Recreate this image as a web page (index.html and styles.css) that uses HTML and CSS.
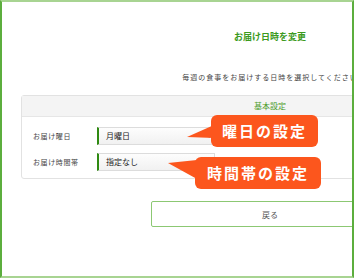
FILE: index.html
```html
<!DOCTYPE html>
<html lang="ja">
<head>
    <meta charset="UTF-8">
    <meta name="viewport" content="width=device-width, initial-scale=1.0">
    <title>お届け日時を変更</title>
    <link rel="stylesheet" href="styles.css">
</head>
<body>
    <div class="frame">
        <div class="page">
            <h1 class="title">お届け日時を変更</h1>
            <p class="lead">毎週の食事をお届けする日時を選択してください</p>
            <div class="panel">
                <div class="panel-head">基本設定</div>
                <div class="panel-body">
                    <div class="row">
                        <span class="label">お届け曜日</span>
                        <div class="select">月曜日<span class="arrow">▾</span></div>
                    </div>
                    <div class="row">
                        <span class="label">お届け時間帯</span>
                        <div class="select">指定なし<span class="arrow">▾</span></div>
                    </div>
                </div>
            </div>
            <button class="back">戻る</button>
        </div>

        <svg class="pointers" width="350" height="274" viewBox="2 2 350 274">
            <polygon points="214,125 187,137 214,138" fill="#fc561d"/>
            <polygon points="197,160 168,163 197,179" fill="#fc561d"/>
        </svg>
        <div class="callout callout-day">曜日の設定</div>
        <div class="callout callout-time">時間帯の設定</div>
    </div>
</body>
</html>
```

FILE: styles.css
```css
body {
    margin: 0;
    font-family: "Noto Sans CJK JP", "Noto Sans", sans-serif;
    background-color: white;
}
.frame {
    position: relative;
    width: 354px;
    height: 278px;
    box-sizing: border-box;
    border-left: 2px solid #5cae3e;
    border-right: 2px solid #5cae3e;
    border-top: 2px solid #a8d492;
    border-bottom: 2px solid #a8d492;
    overflow: hidden;
}
.page {
    width: 536px;
    padding-top: 29px;
}
.title {
    margin: 0;
    font-size: 9px;
    line-height: 12px;
    font-weight: bold;
    color: #3c9a1e;
    text-align: center;
}
.lead {
    margin: 29px 0 0;
    font-size: 7px;
    line-height: 10px;
    letter-spacing: 1px;
    color: #444;
    text-align: center;
}
.panel {
    margin: 13px 19px 0;
    border: 1px solid #e2e2e2;
    border-radius: 3px;
}
.panel-head {
    height: 20px;
    line-height: 20px;
    background-color: #f4f4f4;
    border-bottom: 1px solid #e6e6e6;
    font-size: 8px;
    color: #4d9c2c;
    text-align: center;
}
.panel-body {
    padding: 10px 0 7px 11px;
    display: flex;
    flex-direction: column;
    gap: 8px;
}
.row {
    display: flex;
    align-items: center;
    height: 18px;
}
.label {
    width: 64px;
    font-size: 7px;
    letter-spacing: 0.6px;
    color: #444;
}
.select {
    position: relative;
    width: 108px;
    height: 16px;
    line-height: 16px;
    box-sizing: content-box;
    padding-left: 7px;
    border: 1px solid #dcdcdc;
    border-left: 2px solid #2f8a12;
    background: linear-gradient(#fdfdfd, #f1f1f1);
    font-size: 8px;
    color: #222;
}
.arrow {
    position: absolute;
    right: 3px;
    top: 0;
    font-size: 5px;
    color: #333;
}
.back {
    display: block;
    width: 238px;
    height: 26px;
    margin: 22px auto 0;
    border: 1.5px solid #8cc873;
    border-radius: 2px;
    background-color: white;
    font-family: inherit;
    font-size: 8px;
    color: #555;
}
.pointers {
    position: absolute;
    left: 0;
    top: 0;
}
.callout {
    position: absolute;
    height: 32px;
    line-height: 32px;
    border-radius: 6px;
    background-color: #fc561d;
    color: white;
    font-size: 15px;
    font-weight: bold;
    letter-spacing: 2px;
    text-align: center;
}
.callout-day {
    left: 209px;
    top: 113px;
    width: 107px;
}
.callout-time {
    left: 193px;
    top: 155px;
    width: 126px;
}
```
